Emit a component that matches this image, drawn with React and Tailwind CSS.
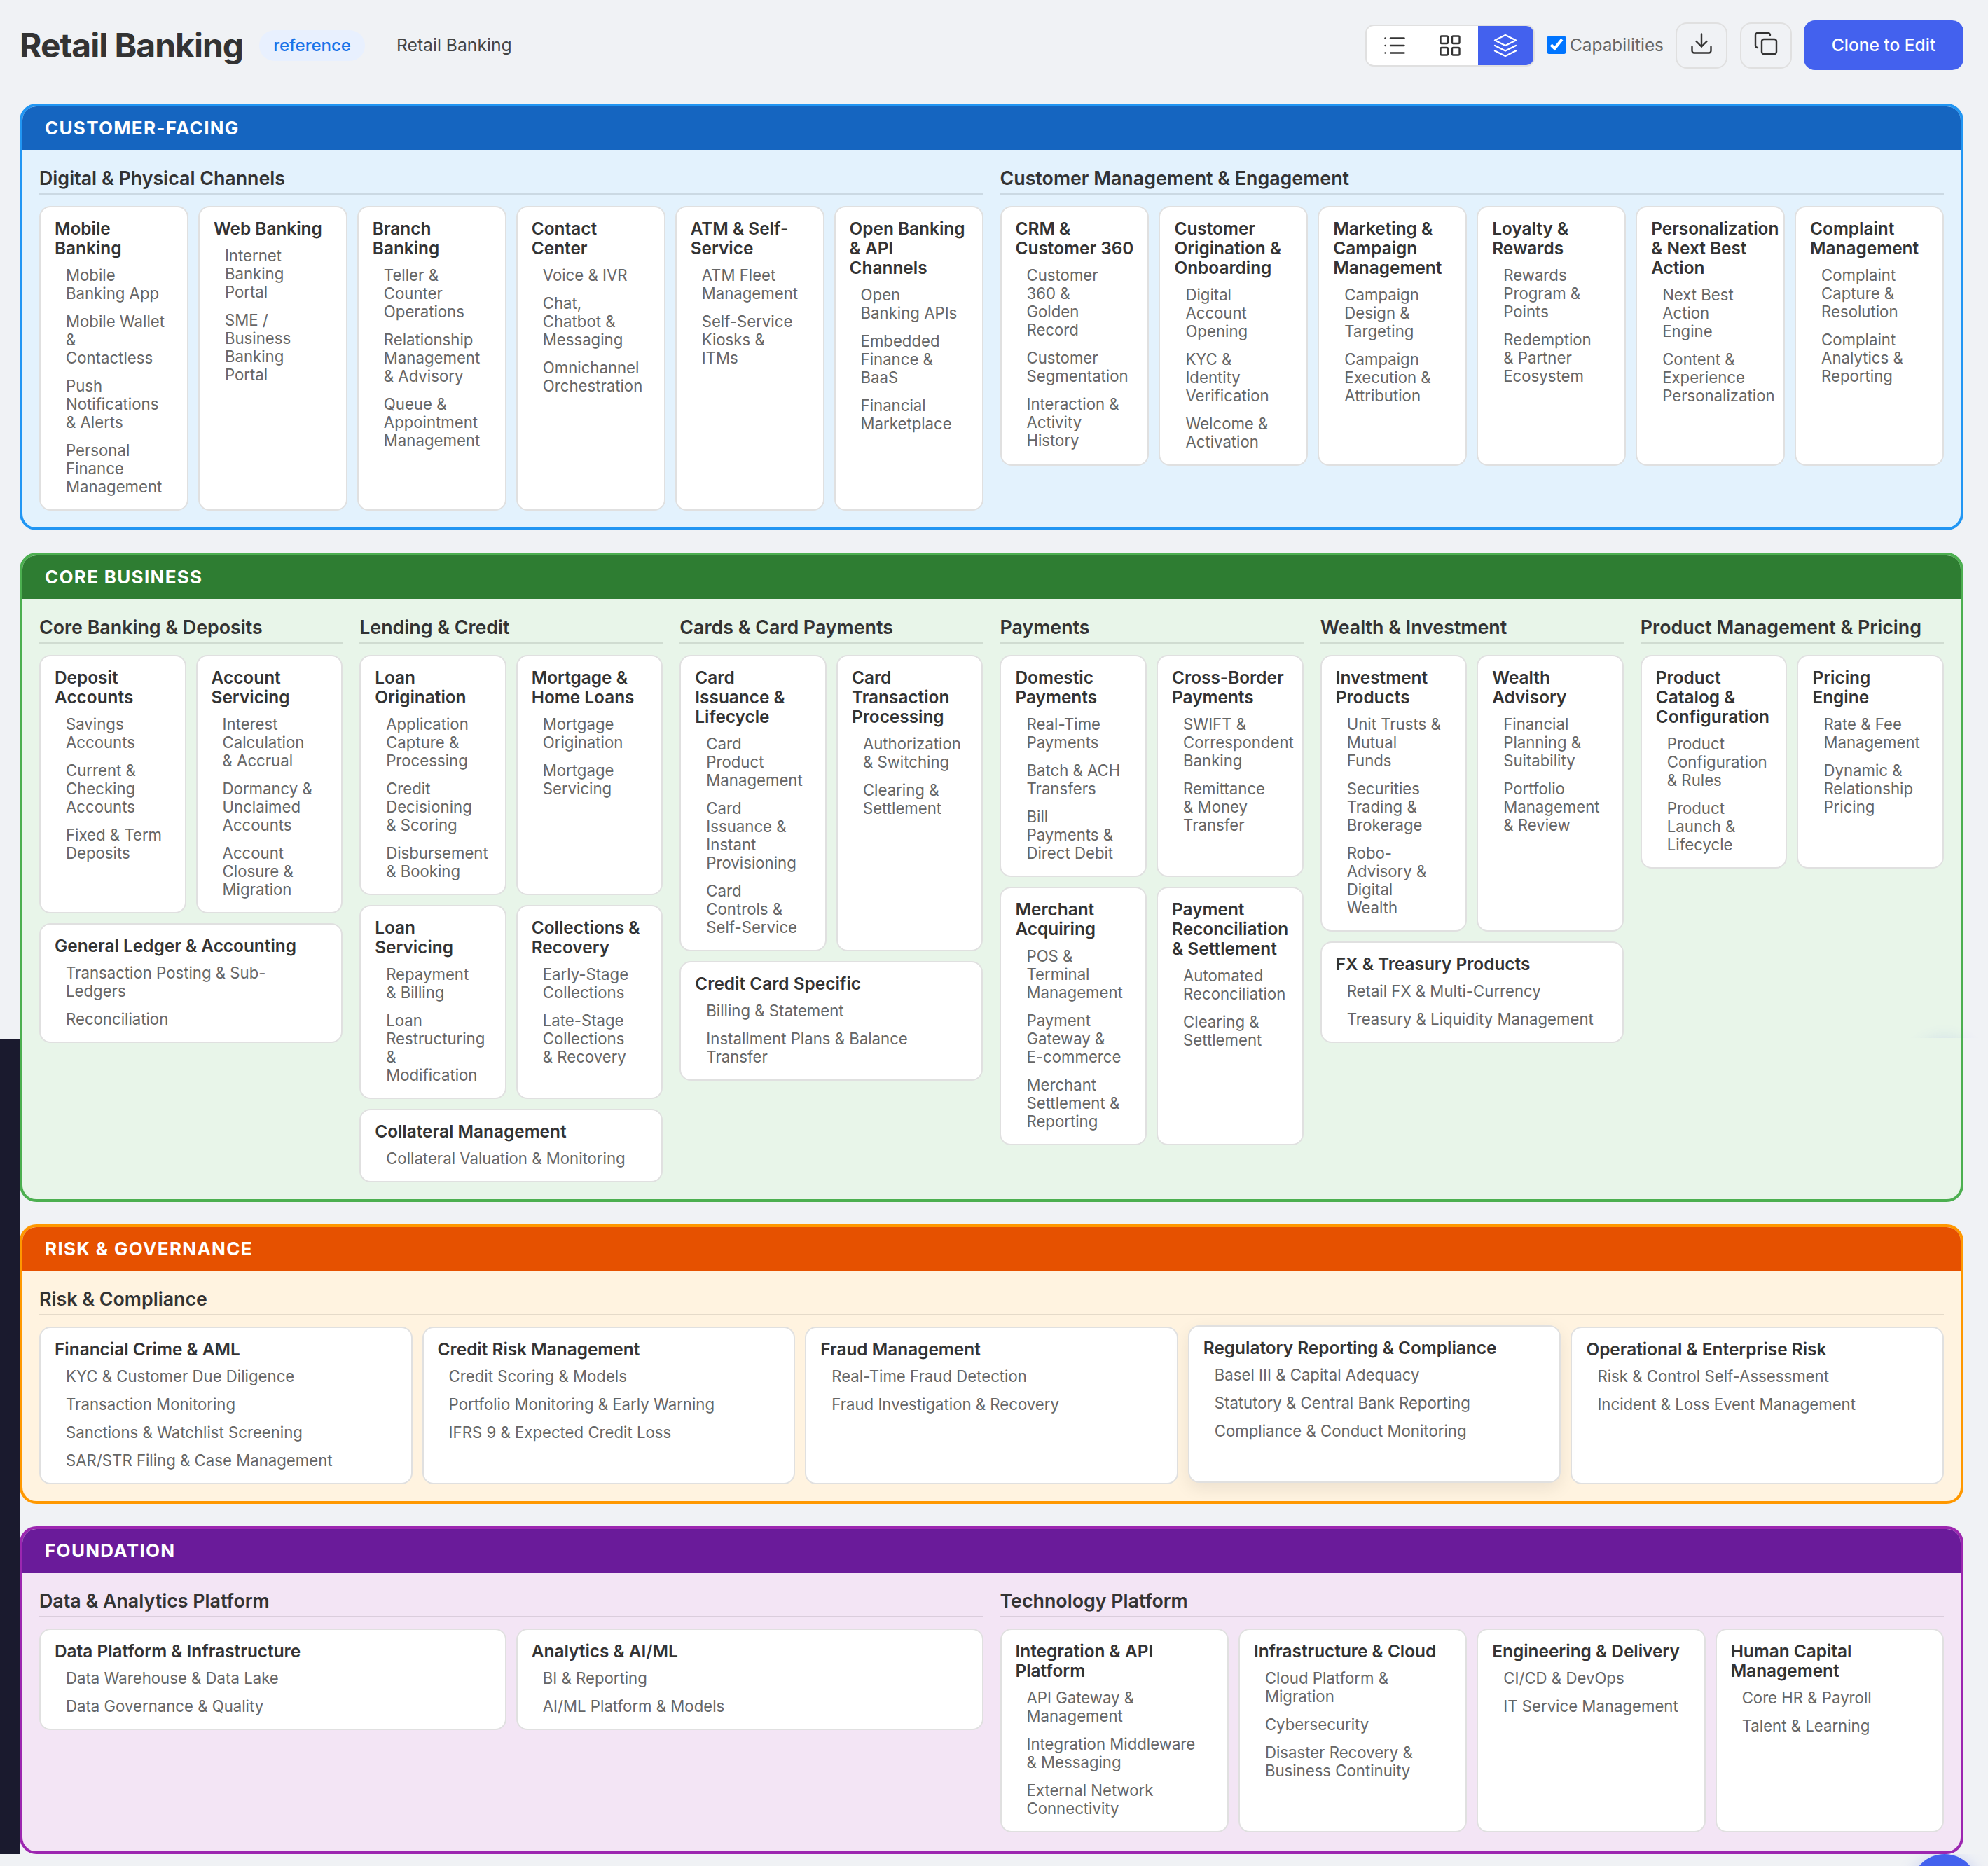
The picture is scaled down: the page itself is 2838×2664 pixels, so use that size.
import React from "react";
import { List, LayoutGrid } from "lucide-react";

// "\n" in a label forces the line break the page shows
const sections = [
  {
    name: "CUSTOMER-FACING",
    bar: "bg-[#1565c0]",
    border: "border-[#2196f3]",
    body: "bg-[#e3f2fd]",
    pad: "p-6",
    groups: [
      {
        title: "Digital & Physical Channels",
        span: "col-span-3",
        cols: "grid-cols-6",
        cards: [
          ["Mobile Banking", ["Mobile Banking App", "Mobile Wallet\n&\nContactless", "Push Notifications & Alerts", "Personal Finance Management"]],
          ["Web Banking", ["Internet Banking Portal", "SME / Business Banking Portal"]],
          ["Branch Banking", ["Teller & Counter Operations", "Relationship Management & Advisory", "Queue & Appointment Management"]],
          ["Contact Center", ["Voice & IVR", "Chat, Chatbot & Messaging", "Omnichannel Orchestration"]],
          ["ATM & Self-Service", ["ATM Fleet Management", "Self-Service Kiosks & ITMs"]],
          ["Open Banking & API Channels", ["Open\nBanking APIs", "Embedded Finance & BaaS", "Financial Marketplace"]],
        ],
      },
      {
        title: "Customer Management & Engagement",
        span: "col-span-3",
        cols: "grid-cols-6",
        cards: [
          ["CRM &\nCustomer 360", ["Customer 360 & Golden Record", "Customer Segmentation", "Interaction & Activity History"]],
          ["Customer Origination & Onboarding", ["Digital Account Opening", "KYC & Identity Verification", "Welcome & Activation"]],
          ["Marketing & Campaign Management", ["Campaign Design & Targeting", "Campaign Execution & Attribution"]],
          ["Loyalty & Rewards", ["Rewards Program & Points", "Redemption & Partner Ecosystem"]],
          ["Personalization & Next Best Action", ["Next Best Action Engine", "Content & Experience Personalization"]],
          ["Complaint Management", ["Complaint Capture & Resolution", "Complaint Analytics & Reporting"]],
        ],
      },
    ],
  },
  {
    name: "CORE BUSINESS",
    bar: "bg-[#2e7d32]",
    border: "border-[#4caf50]",
    body: "bg-[#e8f5e9]",
    pad: "p-6",
    groups: [
      {
        title: "Core Banking & Deposits",
        span: "col-span-1",
        cols: "grid-cols-2",
        cards: [
          ["Deposit Accounts", ["Savings Accounts", "Current & Checking Accounts", "Fixed & Term\nDeposits"]],
          ["Account Servicing", ["Interest Calculation & Accrual", "Dormancy & Unclaimed Accounts", "Account Closure & Migration"]],
          ["General Ledger & Accounting", ["Transaction Posting & Sub-Ledgers", "Reconciliation"], true],
        ],
      },
      {
        title: "Lending & Credit",
        span: "col-span-1",
        cols: "grid-cols-2",
        cards: [
          ["Loan Origination", ["Application Capture & Processing", "Credit Decisioning & Scoring", "Disbursement & Booking"]],
          ["Mortgage & Home Loans", ["Mortgage Origination", "Mortgage Servicing"]],
          ["Loan Servicing", ["Repayment & Billing", "Loan Restructuring & Modification"]],
          ["Collections & Recovery", ["Early-Stage Collections", "Late-Stage Collections & Recovery"]],
          ["Collateral Management", ["Collateral Valuation & Monitoring"], true],
        ],
      },
      {
        title: "Cards & Card Payments",
        span: "col-span-1",
        cols: "grid-cols-2",
        cards: [
          ["Card Issuance & Lifecycle", ["Card Product Management", "Card Issuance & Instant Provisioning", "Card Controls & Self-Service"]],
          ["Card Transaction Processing", ["Authorization & Switching", "Clearing & Settlement"]],
          ["Credit Card Specific", ["Billing & Statement", "Installment Plans & Balance Transfer"], true],
        ],
      },
      {
        title: "Payments",
        span: "col-span-1",
        cols: "grid-cols-2",
        cards: [
          ["Domestic Payments", ["Real-Time Payments", "Batch & ACH\nTransfers", "Bill Payments & Direct Debit"]],
          ["Cross-Border Payments", ["SWIFT & Correspondent Banking", "Remittance & Money Transfer"]],
          ["Merchant Acquiring", ["POS & Terminal Management", "Payment\nGateway &\nE-commerce", "Merchant Settlement & Reporting"]],
          ["Payment Reconciliation & Settlement", ["Automated Reconciliation", "Clearing & Settlement"]],
        ],
      },
      {
        title: "Wealth & Investment",
        span: "col-span-1",
        cols: "grid-cols-2",
        cards: [
          ["Investment Products", ["Unit Trusts &\nMutual\nFunds", "Securities Trading & Brokerage", "Robo-Advisory & Digital Wealth"]],
          ["Wealth Advisory", ["Financial Planning & Suitability", "Portfolio Management & Review"]],
          ["FX & Treasury Products", ["Retail FX & Multi-Currency", "Treasury & Liquidity Management"], true],
        ],
      },
      {
        title: "Product Management & Pricing",
        span: "col-span-1",
        cols: "grid-cols-2",
        cards: [
          ["Product Catalog & Configuration", ["Product Configuration & Rules", "Product Launch & Lifecycle"]],
          ["Pricing Engine", ["Rate & Fee Management", "Dynamic & Relationship Pricing"]],
        ],
      },
    ],
  },
  {
    name: "RISK & GOVERNANCE",
    bar: "bg-[#e65100]",
    border: "border-[#ff9800]",
    body: "bg-[#fff3e0]",
    pad: "p-6",
    groups: [
      {
        title: "Risk & Compliance",
        span: "col-span-6",
        cols: "grid-cols-5",
        cards: [
          ["Financial Crime & AML", ["KYC & Customer Due Diligence", "Transaction Monitoring", "Sanctions & Watchlist Screening", "SAR/STR Filing & Case Management"]],
          ["Credit Risk Management", ["Credit Scoring & Models", "Portfolio Monitoring & Early Warning", "IFRS 9 & Expected Credit Loss"]],
          ["Fraud Management", ["Real-Time Fraud Detection", "Fraud Investigation & Recovery"]],
          ["Regulatory Reporting & Compliance", ["Basel III & Capital Adequacy", "Statutory & Central Bank Reporting", "Compliance & Conduct Monitoring"], false, true],
          ["Operational & Enterprise Risk", ["Risk & Control Self-Assessment", "Incident & Loss Event Management"]],
        ],
      },
    ],
  },
  {
    name: "FOUNDATION",
    bar: "bg-[#6a1b9a]",
    border: "border-[#9c27b0]",
    body: "bg-[#f3e5f5]",
    pad: "px-6 pt-6 pb-[27px]",
    groups: [
      {
        title: "Data & Analytics Platform",
        span: "col-span-3",
        cols: "grid-cols-2",
        cards: [
          ["Data Platform & Infrastructure", ["Data Warehouse & Data Lake", "Data Governance & Quality"]],
          ["Analytics & AI/ML", ["BI & Reporting", "AI/ML Platform & Models"]],
        ],
      },
      {
        title: "Technology Platform",
        span: "col-span-3",
        cols: "grid-cols-4",
        cards: [
          ["Integration & API Platform", ["API Gateway & Management", "Integration Middleware & Messaging", "External Network Connectivity"]],
          ["Infrastructure & Cloud", ["Cloud Platform & Migration", "Cybersecurity", "Disaster Recovery & Business Continuity"]],
          ["Engineering & Delivery", ["CI/CD & DevOps", "IT Service Management"]],
          ["Human Capital Management", ["Core HR & Payroll", "Talent & Learning"]],
        ],
      },
    ],
  },
];

function LayersIcon() {
  return (
    <svg width="36" height="36" viewBox="0 0 24 24" fill="none" stroke="currentColor" strokeWidth="1.6" strokeLinecap="round" strokeLinejoin="round">
      <polygon points="12 2 2 7 12 12 22 7 12 2" />
      <polyline points="2 17 12 22 22 17" />
      <polyline points="2 12 12 17 22 12" />
    </svg>
  );
}

function DownloadIcon() {
  return (
    <svg width="36" height="36" viewBox="0 0 24 24" fill="none" stroke="currentColor" strokeWidth="1.6" strokeLinecap="round" strokeLinejoin="round">
      <path d="M21 15v4a2 2 0 0 1-2 2H5a2 2 0 0 1-2-2v-4" />
      <polyline points="7 10 12 15 17 10" />
      <line x1="12" y1="15" x2="12" y2="3" />
    </svg>
  );
}

function CopyIcon() {
  return (
    <svg width="36" height="36" viewBox="0 0 24 24" fill="none" stroke="currentColor" strokeWidth="1.6" strokeLinecap="round" strokeLinejoin="round">
      <rect x="8" y="8" width="14" height="14" rx="2" />
      <path d="M4 16c-1.1 0-2-.9-2-2V4c0-1.1.9-2 2-2h10c1.1 0 2 .9 2 2" />
    </svg>
  );
}

function Label({ text }) {
  if (!text.includes("\n")) return text;
  return text.split("\n").map((line) => (
    <span key={line} className="block whitespace-nowrap">
      {line}
    </span>
  ));
}

function Card({ card }) {
  const [title, items, wide, hovered] = card;
  return (
    <div
      className={`bg-white border-2 border-[#e0e0e0] rounded-2xl pt-[16px] pb-[12px] px-5 ${wide ? "col-span-full" : ""} ${hovered ? "-translate-y-[2px] shadow-[0_8px_24px_rgba(0,0,0,0.08)]" : ""}`}
    >
      <div className="text-[24.4px] leading-[28px] font-semibold text-[#333] mb-[5px]">
        <Label text={title} />
      </div>
      {items.map((item) => (
        <div key={item} className="text-[22.2px] leading-[26px] text-[#666] px-4 py-[7px]">
          <Label text={item} />
        </div>
      ))}
    </div>
  );
}

function Group({ group }) {
  return (
    <div className={group.span}>
      <div className="text-[26.8px] leading-[32px] font-semibold text-[#333] pb-[6px] border-b-2 border-black/10 mb-4">
        {group.title}
      </div>
      <div className={`grid ${group.cols} gap-[14px]`}>
        {group.cards.map((card) => (
          <Card key={card[0]} card={card} />
        ))}
      </div>
    </div>
  );
}

function Section({ section }) {
  return (
    <div className={`border-4 ${section.border} rounded-3xl overflow-hidden ${section.body}`}>
      <div className={`${section.bar} text-white text-[26px] leading-[32px] font-bold tracking-[1.3px] px-8 py-[15px]`}>
        {section.name}
      </div>
      <div className={`grid grid-cols-6 gap-6 ${section.pad}`}>
        {section.groups.map((group) => (
          <Group key={group.title} group={group} />
        ))}
      </div>
    </div>
  );
}

export default function App() {
  return (
    <div className="relative h-[2664px] overflow-hidden bg-[#f0f2f5] [font-family:Inter,sans-serif]">
      {/* dark strip left of the page */}
      <div className="absolute left-0 top-[1483px] w-[28px] h-[1164px] bg-[#1a1a2e]" />

      {/* floating button, cut off by the page bottom */}
      <div className="absolute left-0 right-0 top-[2647px] h-[17px] overflow-hidden">
        <div className="absolute left-[2729px] top-0 w-[94px] h-[94px] rounded-full bg-[#4361ee] shadow-[0_8px_24px_rgba(67,97,238,0.4)]" />
      </div>

      <div className="relative pl-[28px] pr-[35px]">
        {/* ================= HEADER ================= */}
        <div className="h-[148px] pb-[19px] flex items-center">
          <h1 className="text-[48px] font-bold text-[#333] tracking-[-1px]">Retail Banking</h1>
          <span className="ml-[23px] px-5 h-[44px] flex items-center rounded-full bg-[#e8f0fe] text-[#1a73e8] text-[24px] font-medium">
            reference
          </span>
          <span className="ml-[45px] text-[24.7px] text-[#444]">Retail Banking</span>
          <div className="ml-auto flex items-center">
            <div className="flex w-[242px] h-[60px] bg-white border-2 border-[#e0e0e0] rounded-xl overflow-hidden">
              <div className="flex-1 flex items-center justify-center text-[#333]"><List size={36} strokeWidth={1.6} /></div>
              <div className="flex-1 flex items-center justify-center text-[#333]"><LayoutGrid size={36} strokeWidth={1.6} /></div>
              <div className="flex-1 flex items-center justify-center bg-[#4361ee] text-white"><LayersIcon /></div>
            </div>
            <label className="ml-[18px] flex items-center gap-[6px] text-[24.4px] text-[#666]">
              <input type="checkbox" defaultChecked readOnly className="w-[26px] h-[26px]" />
              Capabilities
            </label>
            <button className="ml-[17px] w-[74px] h-[66px] pb-[6px] flex items-center justify-center border-2 border-[#e0e0e0] rounded-2xl text-[#333]"><DownloadIcon /></button>
            <button className="ml-[18px] w-[74px] h-[66px] pb-[6px] flex items-center justify-center border-2 border-[#e0e0e0] rounded-2xl text-[#333]"><CopyIcon /></button>
            <button className="ml-[17px] w-[228px] h-[71px] rounded-2xl bg-[#4361ee] text-white text-[24.5px] font-medium">Clone to Edit</button>
          </div>
        </div>

        {/* ================= SECTIONS ================= */}
        <div className="flex flex-col gap-8">
          {sections.map((section) => (
            <Section key={section.name} section={section} />
          ))}
        </div>
      </div>

      {/* faint glow left over from the floating button */}
      <div className="absolute left-[2690px] top-[1430px] w-[148px] h-[52px] overflow-hidden">
        <div className="absolute left-[39px] top-[52px] w-[94px] h-[94px] rounded-full shadow-[0_4px_24px_rgba(67,97,238,0.2)]" />
      </div>
    </div>
  );
}
